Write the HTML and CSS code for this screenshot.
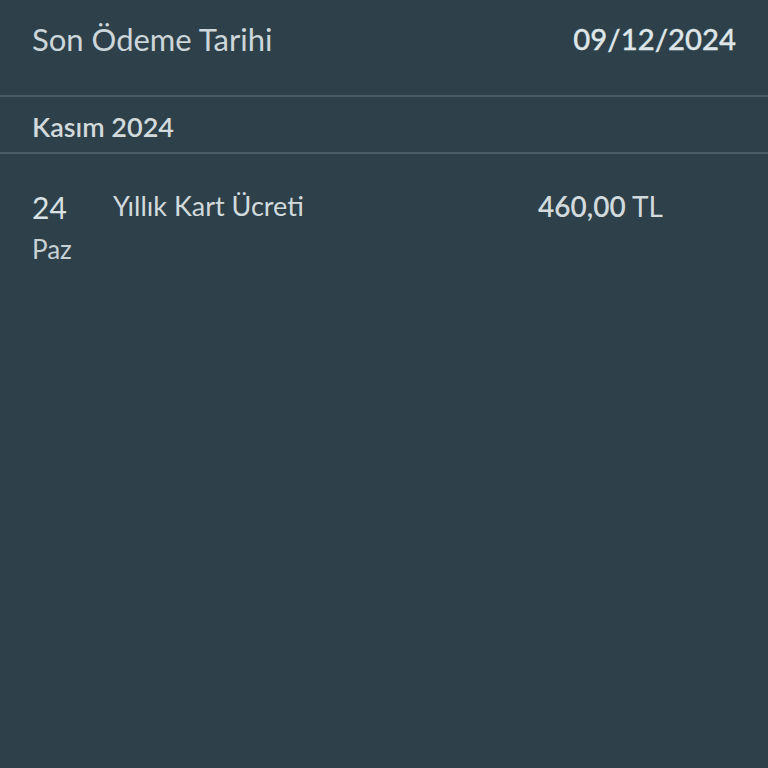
FILE: index.html
```html
<!DOCTYPE html>
<html lang="tr">
<head>
<meta charset="utf-8">
<link rel="stylesheet" href="styles.css">
</head>
<body>
<div class="screen">
  <div class="due-row">
    <span class="due-label">Son Ödeme Tarihi</span>
    <span class="due-date">09/12/2024</span>
  </div>
  <div class="month-row">Kasım 2024</div>
  <div class="tx">
    <div class="tx-date">
      <span class="tx-day">24</span>
      <span class="tx-wd">Paz</span>
    </div>
    <div class="tx-desc">Yıllık Kart Ücreti</div>
    <div class="tx-amount"><span class="num">460,00</span> TL</div>
  </div>
</div>
</body>
</html>
```
FILE: styles.css
```css
html, body {
  margin: 0;
  padding: 0;
  background: #2e414a;
}
.screen {
  width: 768px;
  height: 768px;
  background: #2e414a;
  color: #d9e1e4;
  font-family: Lato, "Open Sans", sans-serif;
}
.due-row {
  height: 97px;
  display: flex;
  align-items: center;
  justify-content: space-between;
  padding: 0 32px 18px 32px;
  box-sizing: border-box;
  border-bottom: 2px solid #4a5c65;
}
.due-label {
  font-size: 31px;
  font-weight: 400;
  color: #cdd6da;
}
.due-date {
  font-size: 29.3px;
  font-weight: 500;
  color: #dfe6e9;
  -webkit-text-stroke: 0.3px #dfe6e9;
}
.month-row {
  height: 57px;
  display: flex;
  align-items: center;
  padding: 3px 32px 0;
  box-sizing: border-box;
  border-bottom: 2px solid #4a5c65;
  font-size: 27px;
  font-weight: 600;
  color: #d2dadd;
}
.tx {
  display: flex;
  align-items: flex-start;
  padding: 33px 32px 0 32px;
}
.tx-date {
  display: flex;
  flex-direction: column;
  width: 81px;
}
.tx-day {
  font-size: 30px;
  line-height: 40px;
  color: #d9e1e4;
}
.tx-wd {
  font-size: 26px;
  line-height: 44px;
  color: #c7d0d4;
}
.tx-desc {
  width: 425px;
  font-size: 27px;
  line-height: 38px;
  color: #d2dadd;
}
.tx-amount {
  font-size: 28px;
  line-height: 38px;
  color: #d2dadd;
}
.tx-amount .num {
  font-weight: 600;
}
```
